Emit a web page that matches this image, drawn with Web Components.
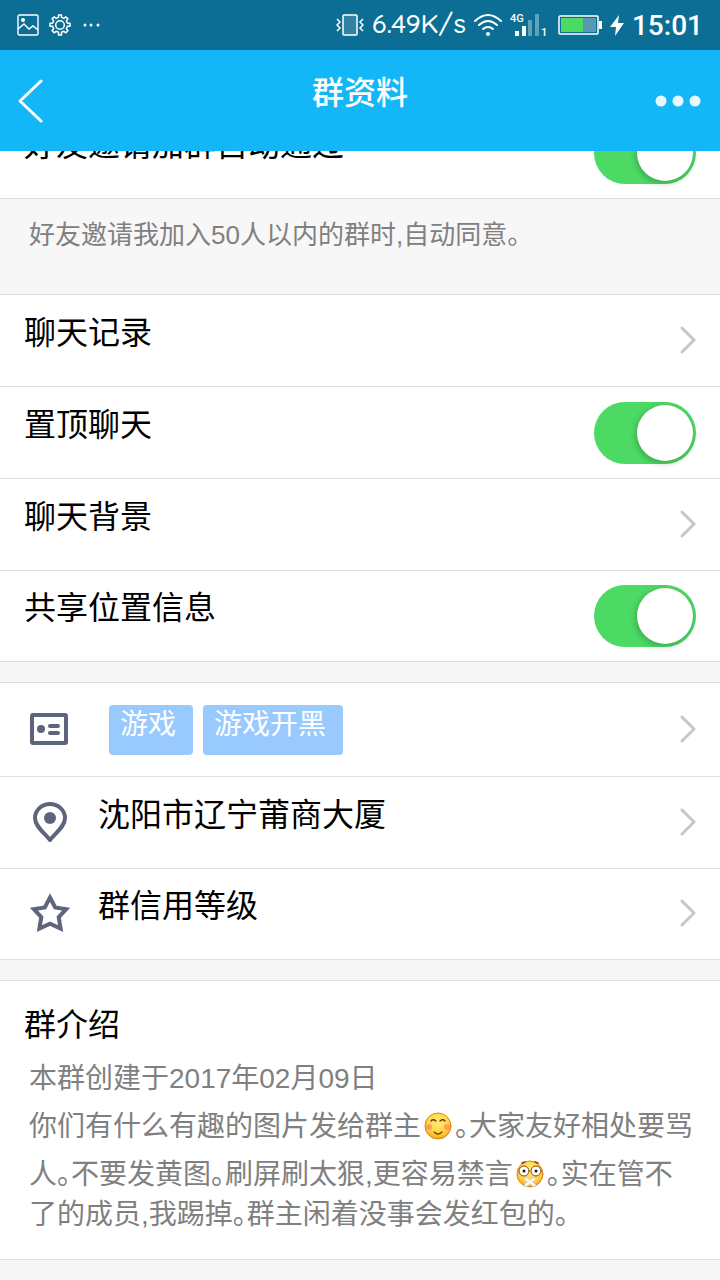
<!DOCTYPE html>
<html lang="zh-CN">
<head>
<meta charset="UTF-8">
<meta name="viewport" content="width=device-width, initial-scale=1">
<title>群资料</title>
<style>
    body {
        margin: 0;
        background: #f7f7f7;
        color: #000;
        font-family: "Liberation Sans", "Noto Sans CJK SC", sans-serif;
        overflow-x: hidden;
    }
</style>
</head>
<body>
<status-bar></status-bar>
<nav-header>群资料</nav-header>
<main>
    <setting-group scrolled>
        <toggle-row>好友邀请加群自动通过</toggle-row>
        <hint-text>好友邀请我加入50人以内的群时,自动同意。</hint-text>
        <link-row>聊天记录</link-row>
        <toggle-row>置顶聊天</toggle-row>
        <link-row>聊天背景</link-row>
        <toggle-row>共享位置信息</toggle-row>
    </setting-group>
    <setting-group>
        <link-row icon="card" tall><tag-list><tag-item>游戏</tag-item><tag-item>游戏开黑</tag-item></tag-list></link-row>
        <link-row icon="pin">沈阳市辽宁莆商大厦</link-row>
        <link-row icon="star">群信用等级</link-row>
    </setting-group>
    <setting-group>
        <group-intro>
            <span slot="title">群介绍</span>
            <span>本群创建于2017年02月09日</span>
            <span>你们有什么有趣的图片发给群主<face-icon type="smile"></face-icon>。大家友好相处要骂</span>
            <span>人。不要发黄图。刷屏刷太狠,更容易禁言<face-icon type="mute"></face-icon>。实在管不</span>
            <span>了的成员,我踢掉。群主闲着没事会发红包的。</span>
        </group-intro>
    </setting-group>
</main>

<script>
// 图标
const ICONS = {
    card: `<svg width="40" height="40" viewBox="0 0 40 40" fill="none" stroke="#5f647d" stroke-width="4">
        <rect x="2" y="6" width="34" height="28" rx="1"/>
        <circle cx="11" cy="20" r="4" fill="#5f647d" stroke="none"/>
        <path d="M20 17h8M20 24h8" stroke-linecap="round"/>
    </svg>`,
    pin: `<svg width="40" height="42" viewBox="0 0 40 42" fill="none" stroke="#5f647d" stroke-width="4" stroke-linejoin="round">
        <path d="M20 39C15 32 5 26 5 17a15 14 0 0 1 30 0c0 9-10 15-15 22z"/>
        <circle cx="20" cy="17" r="6" fill="#5f647d" stroke="none"/>
    </svg>`,
    star: `<svg width="40" height="40" viewBox="0 0 40 40" fill="none" stroke="#5f647d" stroke-width="4">
        <path d="M20 4.500L25.200 14.500 36.200 16.200 28.700 24.200 30.600 35.600 20 30.600 9.400 35.600 11.300 24.200 3.800 16.200 14.800 14.500z"/>
    </svg>`,
    chevron: `<svg width="16" height="28" viewBox="0 0 16 28" fill="none" stroke="#c7c7c7" stroke-width="3" stroke-linecap="round" stroke-linejoin="round">
        <path d="M2 2l12 12L2 26"/>
    </svg>`
};

const FACES = {
    smile: `<path d="M7 9q2-2.500 5 0M16 9q3-2.500 5 0" stroke="#6b3a08" stroke-width="1.300"/>
        <circle cx="5" cy="15" r="3" fill="#ff8a62" opacity=".75"/>
        <circle cx="23" cy="15" r="3" fill="#ff8a62" opacity=".75"/>
        <path d="M10 20q4 4 8 0" stroke="#8a3e06" stroke-width="1.300"/>`,
    mute: `<circle cx="8" cy="11" r="5" fill="#fff" stroke="#8a4a10"/>
        <circle cx="20" cy="11" r="5" fill="#fff" stroke="#8a4a10"/>
        <circle cx="8" cy="11" r="1.500" fill="#301808"/>
        <circle cx="20" cy="11" r="1.500" fill="#301808"/>
        <path d="M6 3l3-1M19 2l3 1" stroke="#8a3e06" stroke-width="1.500"/>
        <path d="M10 19l8 6M18 19l-8 6" stroke="#bbb" stroke-width="4"/>
        <path d="M10 19l8 6M18 19l-8 6" stroke="#f4f4f4" stroke-width="3"/>`
};

// 组件基类
class BaseElement extends HTMLElement {
    constructor() {
        super();
        this.attachShadow({ mode: 'open' });
    }

    connectedCallback() {
        this.shadowRoot.innerHTML = this.render();
    }
}

// 系统状态栏
class StatusBar extends BaseElement {
    render() {
        return `
            <style>
                :host {
                    display: flex;
                    align-items: center;
                    justify-content: space-between;
                    height: 50px;
                    padding: 0 17px;
                    background: #0c6e94;
                    color: #fff;
                }
                div { display: flex; align-items: center; }
                svg { display: block; }
                .left { gap: 10px; }
                .right { gap: 8px; }
                .speed { font: 500 27px/46px Quicksand, Lato, sans-serif; padding-bottom: 4px; }
                .time { font: 500 28px/48px Roboto, sans-serif; padding-top: 2px; }
            </style>
            <div class="left">
                <svg width="22" height="22" viewBox="0 0 22 22" fill="none" stroke="#fff" stroke-width="1.400">
                    <rect x="1" y="1" width="20" height="20" rx="1.500"/>
                    <circle cx="6" cy="6" r="2" fill="#fff" stroke="none"/>
                    <path d="M1 15l6-5 5 5 4-3 5 4"/>
                </svg>
                <svg width="22" height="22" viewBox="0 0 22 22" fill="none" stroke="#fff" stroke-width="1.500" stroke-linejoin="round">
                    <path d="M9.500 1h3v2.400l2.400 1 1.900-1.600 2.100 2.100-1.500 1.900 1 2.500H21v3h-2.600l-1 2.500 1.500 1.900-2.100 2.100-1.900-1.500-2.400 1V21h-3v-2.700l-2.400-1-1.900 1.500-2.100-2.100 1.500-1.900-1-2.500H1v-3h2.600l1-2.500-1.500-1.900 2.100-2.100 1.900 1.600 2.400-1z"/>
                    <circle cx="11" cy="11" r="4.300"/>
                </svg>
                <svg width="20" height="22" viewBox="0 0 20 22" fill="#fff">
                    <circle cx="4" cy="11" r="1.500"/><circle cx="10" cy="11" r="1.500"/><circle cx="17" cy="11" r="1.500"/>
                </svg>
            </div>
            <div class="right">
                <svg width="28" height="24" viewBox="0 0 28 24" fill="none" stroke="#fff" stroke-width="1.500">
                    <rect x="7" y="2" width="14" height="20" rx="1" fill="#fff" fill-opacity=".15"/>
                    <path d="M1 6l3 3-3 3 3 3-3 3M27 6l-3 3 3 3-3 3 3 3"/>
                </svg>
                <span class="speed">6.49K/s</span>
                <svg width="28" height="24" viewBox="0 0 28 24" fill="none" stroke="#fff" stroke-width="2" stroke-linecap="round">
                    <path d="M1 8q13-12 26 0M5 12q9-8 18 0M9 16q5-4 10 0"/>
                    <circle cx="14" cy="21" r="2" fill="#fff" stroke="none"/>
                </svg>
                <svg width="40" height="26" viewBox="0 0 40 26" fill="#fff" font-family="Roboto, sans-serif" font-weight="500">
                    <text x="0" y="10" font-size="11">4G</text>
                    <path d="M5 19h4v5H5zM12 14h4v10h-4z"/>
                    <path d="M18 8h4v16h-4zM25 2h4v22h-4z" opacity=".35"/>
                    <text x="31" y="24" font-size="11">1</text>
                </svg>
                <svg width="44" height="22" viewBox="0 0 44 22">
                    <rect x="1" y="2" width="39" height="18" rx="1" fill="none" stroke="#fff" stroke-width="1.500"/>
                    <path d="M41 7h3v8h-3z" fill="#fff"/>
                    <path d="M25 4h13v14H25z" fill="#fff" opacity=".3"/>
                    <path d="M3 4h22v14H3z" fill="#4cd964"/>
                </svg>
                <svg width="14" height="24" viewBox="0 0 14 24" fill="#fff"><path d="M9 2L0 14h6L5 23l9-13H8z"/></svg>
                <span class="time">15:01</span>
            </div>
        `;
    }
}

// 顶部导航
class NavHeader extends BaseElement {
    render() {
        return `
            <style>
                :host {
                    display: grid;
                    grid-template-columns: 90px 1fr 90px;
                    align-items: center;
                    height: 101px;
                    position: relative;
                    z-index: 1;
                    background: #13b7f7;
                    color: #fff;
                }
                h1 {
                    margin: 0;
                    padding-bottom: 16px;
                    font-size: 32px;
                    font-weight: 500;
                    line-height: 40px;
                    text-align: center;
                }
                button {
                    display: flex;
                    align-items: center;
                    height: 80px;
                    padding: 0 18px;
                    border: 0;
                    background: none;
                }
                .more { justify-content: flex-end; }
            </style>
            <button type="button" aria-label="返回">
                <svg width="26" height="44" viewBox="0 0 26 44" fill="none" stroke="#fff" stroke-width="3" stroke-linecap="round" stroke-linejoin="round">
                    <path d="M23 2L2 22l21 20"/>
                </svg>
            </button>
            <h1><slot></slot></h1>
            <button type="button" class="more" aria-label="更多">
                <svg width="48" height="12" viewBox="0 0 48 12" fill="#e7f7ff">
                    <circle cx="7" cy="6" r="5.500"/><circle cx="24" cy="6" r="5.500"/><circle cx="41" cy="6" r="5.500"/>
                </svg>
            </button>
        `;
    }
}

// 设置分组
class SettingGroup extends BaseElement {
    render() {
        return `
            <style>
                :host {
                    display: block;
                    margin-bottom: 20px;
                    background: #fff;
                    border-top: 1px solid #dedede;
                }
                /* 列表已滚动,首行有一部分在导航下面 */
                :host([scrolled]) { margin-top: -45px; }
            </style>
            <slot></slot>
        `;
    }
}

const ROW_STYLE = `
    :host { display: block; border-bottom: 1px solid #dedede; }
    .row {
        display: flex;
        align-items: center;
        height: 91px;
        padding: 0 24px;
        color: inherit;
        font-size: 32px;
        line-height: 40px;
        text-decoration: none;
    }
    :host(:last-child) .row { height: 90px; }
    .text { flex: 1; padding-bottom: 16px; }
    svg { display: block; margin-bottom: 2px; }
`;

// 带开关的行
class ToggleRow extends BaseElement {
    render() {
        return `
            <style>
                ${ROW_STYLE}
                input {
                    appearance: none;
                    display: flex;
                    align-items: center;
                    width: 102px;
                    height: 62px;
                    margin: 0;
                    padding: 0 3px;
                    box-sizing: border-box;
                    border-radius: 31px;
                    background: #ddd;
                }
                input::before {
                    content: "";
                    width: 56px;
                    height: 56px;
                    border-radius: 50%;
                    background: #fff;
                    box-shadow: -1px 2px 6px rgba(0, 0, 0, .25);
                }
                input:checked { justify-content: flex-end; background: #4cd964; }
            </style>
            <label class="row">
                <span class="text"><slot></slot></span>
                <input type="checkbox" checked>
            </label>
        `;
    }
}

// 可点击的行
class LinkRow extends BaseElement {
    render() {
        const icon = this.getAttribute('icon');
        return `
            <style>
                ${ROW_STYLE}
                .icon { width: 40px; margin: 0 28px 0 6px; }
                :host([tall]) .row { height: 93px; }
                :host([tall]) .text { padding-bottom: 0; }
            </style>
            <a class="row" href="#">
                ${icon ? `<span class="icon">${ICONS[icon]}</span>` : ''}
                <span class="text"><slot></slot></span>
                ${ICONS.chevron}
            </a>
        `;
    }
}

// 说明文字
class HintText extends BaseElement {
    render() {
        return `
            <style>
                :host {
                    display: block;
                    height: 96px;
                    padding: 18px 29px 0;
                    box-sizing: border-box;
                    border-bottom: 1px solid #dedede;
                    background: #f7f7f7;
                    color: #808080;
                    font-size: 26px;
                    line-height: 36px;
                    font-feature-settings: "halt";
                }
            </style>
            <slot></slot>
        `;
    }
}

// 标签
class TagList extends BaseElement {
    render() {
        return `
            <style>:host { display: flex; gap: 10px; margin-left: 11px; }</style>
            <slot></slot>
        `;
    }
}

class TagItem extends BaseElement {
    render() {
        return `
            <style>
                :host {
                    padding: 0 17px 10px 11px;
                    border-radius: 4px;
                    background: #99caff;
                    color: #fff;
                    font-size: 28px;
                    line-height: 40px;
                }
            </style>
            <slot></slot>
        `;
    }
}

// 群介绍
class GroupIntro extends BaseElement {
    render() {
        return `
            <style>
                :host {
                    display: block;
                    padding: 24px 24px 28px;
                    border-bottom: 1px solid #dedede;
                }
                h2 { margin: 0 0 10px; font-size: 32px; font-weight: 400; line-height: 40px; }
                .content {
                    padding-left: 5px;
                    color: #808080;
                    font-size: 28px;
                    line-height: 48px;
                    font-feature-settings: "halt";
                }
                .content ::slotted(span) { display: block; }
                .content ::slotted(span:last-child) { line-height: 32px; }
            </style>
            <h2><slot name="title"></slot></h2>
            <div class="content"><slot></slot></div>
        `;
    }
}

// 表情
class FaceIcon extends BaseElement {
    render() {
        return `
            <style>
                :host { display: inline-block; width: 28px; height: 28px; margin: 0 3px; vertical-align: -4px; }
                svg { display: block; }
            </style>
            <svg width="28" height="28" viewBox="0 0 28 28" fill="none" stroke-linecap="round">
                <defs><radialGradient id="g" cx=".5" cy=".35" r=".65">
                    <stop offset="0" stop-color="#ffee78"/><stop offset=".7" stop-color="#ffd040"/><stop offset="1" stop-color="#f5a31c"/>
                </radialGradient></defs>
                <circle cx="14" cy="14" r="13" fill="url(#g)" stroke="#d98912"/>
                ${FACES[this.getAttribute('type')]}
            </svg>
        `;
    }
}

// 注册组件
customElements.define('status-bar', StatusBar);
customElements.define('nav-header', NavHeader);
customElements.define('setting-group', SettingGroup);
customElements.define('toggle-row', ToggleRow);
customElements.define('link-row', LinkRow);
customElements.define('hint-text', HintText);
customElements.define('tag-list', TagList);
customElements.define('tag-item', TagItem);
customElements.define('group-intro', GroupIntro);
customElements.define('face-icon', FaceIcon);
</script>
</body>
</html>
